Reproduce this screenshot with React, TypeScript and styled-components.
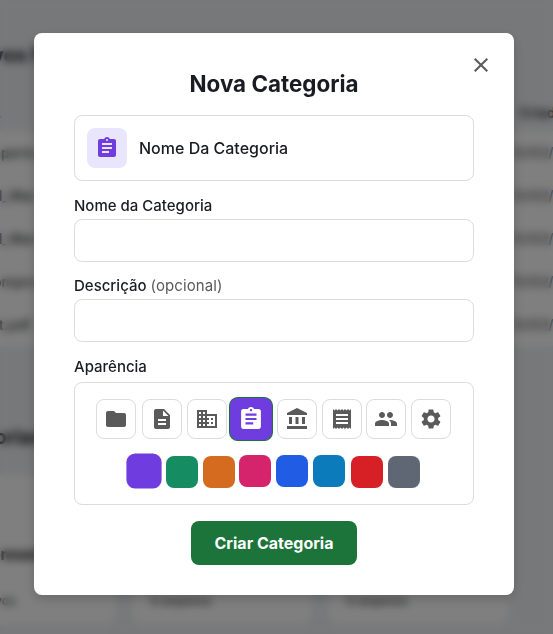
import React, { useState } from "react";
import styled, { createGlobalStyle } from "styled-components";
import type { IconType } from "react-icons";
import {
  MdAccountBalance,
  MdAssignment,
  MdBusiness,
  MdClose,
  MdDescription,
  MdFolder,
  MdPeople,
  MdReceipt,
  MdSettings,
} from "react-icons/md";

const GlobalStyle = createGlobalStyle`
  *, *::before, *::after { box-sizing: border-box; }
  html, body { margin: 0; height: 100%; overflow: hidden; background: #eff1f4; }
  body, button, input { font-family: Inter, "Liberation Sans", sans-serif; }
`;

/* Page behind the dialog */

const Page = styled.div`
  height: 634px;
  overflow: hidden;
  color: #1a1c22;
`;

const SectionTitle = styled.h2<{ $height: number; $top: number; $shift: number }>`
  margin: 0 0 0 ${(p) => p.$shift}px;
  height: ${(p) => p.$height}px;
  padding-top: ${(p) => p.$top}px;
  font-size: 20px;
  line-height: 24px;
  font-weight: 700;
`;

const TableRow = styled.div<{ $head?: boolean }>`
  height: ${(p) => (p.$head ? 38 : 43)}px;
  display: flex;
  align-items: center;
  justify-content: space-between;
  background: ${(p) => (p.$head ? "#eff1f4" : "#ffffff")};
  font-size: 14px;
  font-weight: ${(p) => (p.$head ? 600 : 500)};
  color: ${(p) => (p.$head ? "#33363c" : "#44464b")};
  white-space: nowrap;
`;

const NameCell = styled.span<{ $shift: number }>`
  margin-left: ${(p) => p.$shift}px;
`;

const DateCell = styled.span<{ $head?: boolean }>`
  width: ${(p) => (p.$head ? 34 : 42)}px;
  flex: none;
  color: ${(p) => (p.$head ? "#33363c" : "#5c5e63")};
`;

const CardGrid = styled.div`
  display: grid;
  grid-template-columns: 116px 180px 180px;
  column-gap: 16px;
`;

const FolderCard = styled.div<{ $first?: boolean }>`
  height: 150px;
  padding: 69px 20px 0 ${(p) => (p.$first ? 0 : 19)}px;
  background: #ffffff;
  border-radius: ${(p) => (p.$first ? "0 12px 12px 0" : "12px")};
`;

const FolderName = styled.div`
  height: 22px;
  margin-left: -9px;
  font-size: 15px;
  line-height: 22px;
  font-weight: 700;
`;

const FolderCount = styled.div<{ $shift?: number }>`
  margin-top: 27px;
  margin-left: ${(p) => p.$shift ?? 0}px;
  font-size: 12px;
  line-height: 16px;
  font-weight: 500;
  color: #44464b;
`;

/* Dialog */

const Backdrop = styled.div`
  position: fixed;
  inset: 0;
  display: flex;
  align-items: flex-start;
  padding: 33px 39px 0 34px;
  background: rgba(0, 0, 0, 0.5);
  backdrop-filter: blur(4px);
`;

const Dialog = styled.form`
  position: relative;
  width: 480px;
  height: 562px;
  padding: 36px 40px 30px;
  display: flex;
  flex-direction: column;
  background: #ffffff;
  border-radius: 8px;
  box-shadow: 0 4px 12px rgba(0, 0, 0, 0.18);
  color: #1a1c24;
`;

const CloseButton = styled.button`
  position: absolute;
  top: 20px;
  right: 21px;
  width: 24px;
  height: 24px;
  padding: 0;
  display: grid;
  place-items: center;
  border: 0;
  background: none;
  color: #5a5a5a;
`;

const Title = styled.h1`
  margin: 0;
  height: 46px;
  font-size: 22.4px;
  line-height: 30px;
  font-weight: 700;
  text-align: center;
`;

const Preview = styled.div`
  height: 66px;
  display: flex;
  align-items: center;
  gap: 12px;
  padding: 0 12px;
  border: 1px solid #dadcdd;
  border-radius: 8px;
  font-size: 16px;
  font-weight: 500;
`;

const PreviewIcon = styled.span<{ $color: string }>`
  width: 40px;
  height: 40px;
  display: grid;
  place-items: center;
  border-radius: 8px;
  background: #e9e5fd;
  color: ${(p) => p.$color};
`;

const Label = styled.label<{ $top: number }>`
  height: 20px;
  margin-top: ${(p) => p.$top}px;
  margin-bottom: 3px;
  font-size: 15px;
  line-height: 20px;
  font-weight: 500;
`;

const Optional = styled.span`
  color: #5a5a5a;
  font-weight: 400;
  letter-spacing: 0.1px;
`;

const TextInput = styled.input`
  height: 43px;
  padding: 0 12px;
  border: 1px solid #dadcdd;
  border-radius: 8px;
  outline: 0;
  font-size: 15px;
`;

const Appearance = styled.div`
  height: 123px;
  margin-top: 2px;
  padding: 16px 0 0 21px;
  border: 1px solid #dadcdd;
  border-radius: 8px;
`;

const IconRow = styled.div`
  display: grid;
  grid-template-columns: 46px 45px 44px 46px 45px 44px 45px 40px;
`;

const IconOption = styled.button<{ $selected: boolean; $color: string }>`
  width: 40px;
  height: 40px;
  padding: 0;
  display: grid;
  place-items: center;
  border: 1px solid ${(p) => (p.$selected ? "#1c743a" : "#dadcdd")};
  border-radius: 8px;
  background: ${(p) => (p.$selected ? p.$color : "#ffffff")};
  color: ${(p) => (p.$selected ? "#ffffff" : "#5a5a5a")};
  transform: ${(p) => (p.$selected ? "scale(1.1)" : "none")};
`;

const SwatchRow = styled.div`
  margin: 16px 0 0 32px;
  display: grid;
  grid-template-columns: 38px 37px 36px 37px 37px 38px 37px 32px;
`;

const Swatch = styled.button<{ $color: string; $selected: boolean; $drop: number }>`
  width: 32px;
  height: 32px;
  margin-top: ${(p) => p.$drop}px;
  padding: 0;
  border: 0;
  border-radius: 8px;
  background: ${(p) => p.$color};
  transform: ${(p) => (p.$selected ? "scale(1.1)" : "none")};
`;

const SubmitButton = styled.button`
  align-self: center;
  width: 166px;
  height: 44px;
  margin: 16px 0 0;
  padding: 0;
  border: 0;
  border-radius: 8px;
  background: #1c743a;
  color: #ffffff;
  font-size: 16px;
  font-weight: 700;
`;

const rows = [
  { name: "aperto", shift: -7 },
  { name: "l_Mar", shift: -1 },
  { name: "l_Mar", shift: -1 },
  { name: "ompro", shift: -7 },
  { name: "t.pdf", shift: -1 },
];

const icons: { name: string; Icon: IconType }[] = [
  { name: "pasta", Icon: MdFolder },
  { name: "documento", Icon: MdDescription },
  { name: "empresa", Icon: MdBusiness },
  { name: "tarefa", Icon: MdAssignment },
  { name: "banco", Icon: MdAccountBalance },
  { name: "recibo", Icon: MdReceipt },
  { name: "pessoas", Icon: MdPeople },
  { name: "ajustes", Icon: MdSettings },
];

const colors = [
  { value: "#6f3ce0", drop: 0 },
  { value: "#168c62", drop: 1 },
  { value: "#d46b1e", drop: 1 },
  { value: "#d6246c", drop: 0 },
  { value: "#205de4", drop: 0 },
  { value: "#0b7bbb", drop: 0 },
  { value: "#d72026", drop: 1 },
  { value: "#606774", drop: 1 },
];

export default function App() {
  const [icon, setIcon] = useState(3);
  const [color, setColor] = useState(0);
  const SelectedIcon = icons[icon].Icon;
  const selectedColor = colors[color].value;

  return (
    <>
      <GlobalStyle />
      <Page aria-hidden="true">
        <SectionTitle $height={93} $top={43} $shift={-8}>vos f</SectionTitle>
        <TableRow $head>
          <NameCell $shift={-3}>.</NameCell>
          <DateCell $head>Criado</DateCell>
        </TableRow>
        {rows.map((row, i) => (
          <TableRow key={i}>
            <NameCell $shift={row.shift}>{row.name}</NameCell>
            <DateCell>12/02/2</DateCell>
          </TableRow>
        ))}
        <SectionTitle $height={129} $top={79} $shift={-18}>gorias</SectionTitle>
        <CardGrid>
          <FolderCard $first>
            <FolderName>presen</FolderName>
            <FolderCount $shift={-8}>ivos</FolderCount>
          </FolderCard>
          <FolderCard>
            <FolderName />
            <FolderCount>0 arquivos</FolderCount>
          </FolderCard>
          <FolderCard>
            <FolderName />
            <FolderCount>0 arquivos</FolderCount>
          </FolderCard>
        </CardGrid>
      </Page>
      <Backdrop>
        <Dialog role="dialog" aria-label="Nova Categoria">
          <CloseButton type="button" aria-label="Fechar">
            <MdClose size={24} />
          </CloseButton>
          <Title>Nova Categoria</Title>
          <Preview>
            <PreviewIcon $color={selectedColor}>
              <SelectedIcon size={24} />
            </PreviewIcon>
            <span>Nome Da Categoria</span>
          </Preview>
          <Label $top={15} htmlFor="nome">Nome da Categoria</Label>
          <TextInput id="nome" />
          <Label $top={14} htmlFor="descricao">
            Descrição <Optional>(opcional)</Optional>
          </Label>
          <TextInput id="descricao" />
          <Label $top={15} as="div">Aparência</Label>
          <Appearance>
            <IconRow>
              {icons.map(({ name, Icon }, i) => (
                <IconOption
                  key={name}
                  type="button"
                  aria-label={name}
                  $selected={i === icon}
                  $color={selectedColor}
                  onClick={() => setIcon(i)}
                >
                  <Icon size={24} />
                </IconOption>
              ))}
            </IconRow>
            <SwatchRow>
              {colors.map(({ value, drop }, i) => (
                <Swatch
                  key={value}
                  type="button"
                  aria-label={value}
                  $color={value}
                  $drop={drop}
                  $selected={i === color}
                  onClick={() => setColor(i)}
                />
              ))}
            </SwatchRow>
          </Appearance>
          <SubmitButton type="button">Criar Categoria</SubmitButton>
        </Dialog>
      </Backdrop>
    </>
  );
}
